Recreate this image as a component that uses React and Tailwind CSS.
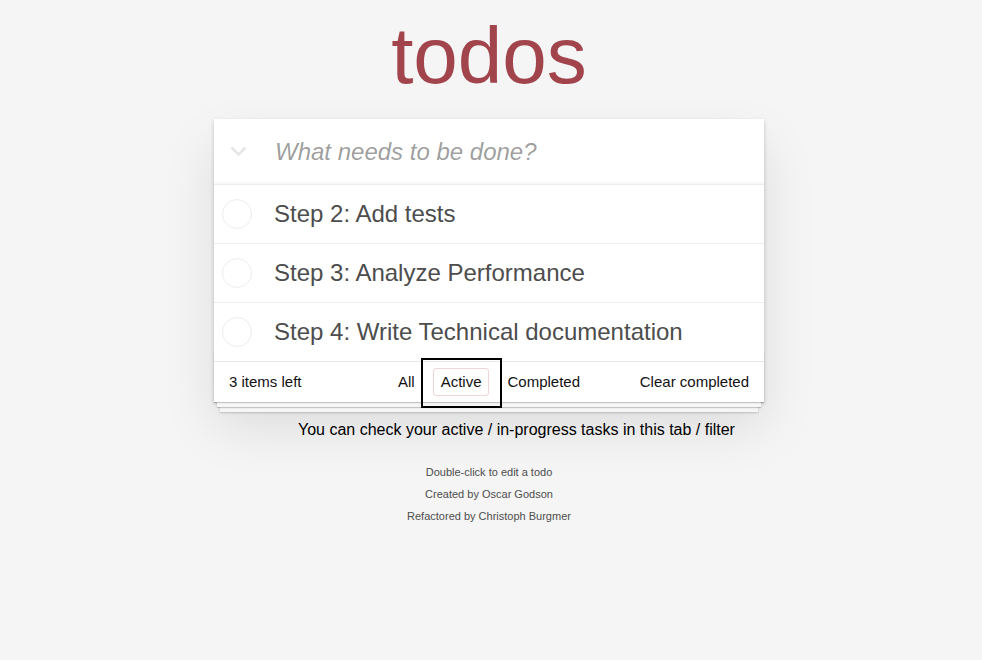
const todos = ['Step 2: Add tests', 'Step 3: Analyze Performance', 'Step 4: Write Technical documentation']

const font = { fontFamily: '"Liberation Sans", Arial, sans-serif' }

export default function App() {
  return (
    <div className="min-h-screen bg-[#f5f5f5] text-[#4d4d4d] pr-[4px]" style={font}>
      <div className="mx-auto w-[550px] pt-[16px]">
        <h1 className="text-center text-[80px] leading-[80px] font-normal text-[#a1444b] mb-[23px]">todos</h1>

        {/* App box */}
        <div className="relative">
          <section className="bg-white shadow-[0_2px_4px_0_rgba(0,0,0,0.2),0_25px_50px_0_rgba(0,0,0,0.1)]">
            <header className="flex items-center h-[65px] shadow-[inset_0_-2px_1px_rgba(0,0,0,0.03)]">
              <div className="w-[61px] h-full flex items-center pl-[16px]">
                <svg width="17" height="11" viewBox="0 0 17 11">
                  <polyline points="1.5,1.5 8.5,8.5 15.5,1.5" fill="none" stroke="#e6e6e6" strokeWidth="2.6" />
                </svg>
              </div>
              <input
                className="flex-1 h-full bg-transparent outline-none text-[24px] text-[#4d4d4d] pr-[16px] placeholder:italic placeholder:text-[rgba(0,0,0,0.4)]"
                style={font}
                placeholder="What needs to be done?"
              />
            </header>

            <ul>
              {todos.map((t) => (
                <li key={t} className="flex items-center h-[59px] border-t border-[#ededed]">
                  <span className="ml-[8px] w-[30px] h-[30px] rounded-full border border-[#ededed]" />
                  <span className="ml-[22px] mb-[2px] text-[24px] leading-[29px] text-[#4d4d4d]">{t}</span>
                </li>
              ))}
            </ul>

            <footer className="relative grid grid-cols-[1fr_auto_1fr] items-center h-[41px] px-[15px] border-t border-[#e6e6e6] text-[15px] text-[#111] before:content-[''] before:absolute before:inset-x-0 before:bottom-0 before:h-[50px] before:pointer-events-none before:shadow-[0_1px_1px_rgba(0,0,0,0.2),0_8px_0_-3px_#f6f6f6,0_9px_1px_-3px_rgba(0,0,0,0.2),0_16px_0_-6px_#f6f6f6,0_17px_2px_-6px_rgba(0,0,0,0.2)]">
              <span className="leading-[20px]">3 items left</span>
              <ul className="flex gap-[4px] leading-[20px]">
                <li className="m-[3px] px-[7px] py-[3px] border border-transparent rounded-[3px]">All</li>
                <li className="m-[3px] px-[7px] py-[3px] border border-[rgba(175,47,47,0.2)] rounded-[3px]">Active</li>
                <li className="m-[3px] px-[7px] py-[3px] border border-transparent rounded-[3px]">Completed</li>
              </ul>
              <span className="justify-self-end leading-[20px]">Clear completed</span>
            </footer>
          </section>

          {/* Tour highlight */}
          <div className="absolute left-[207px] top-[239px] w-[81px] h-[50px] border-2 border-black" />
          <p className="absolute left-[84px] top-[302px] whitespace-nowrap text-[16px] leading-[18px] text-black">
            You can check your active / in-progress tasks in this tab / filter
          </p>
        </div>

        <footer className="mt-[59px] text-center text-[11px] leading-[22px] text-[#4d4d4d]">
          <p>Double-click to edit a todo</p>
          <p>Created by Oscar Godson</p>
          <p>Refactored by Christoph Burgmer</p>
        </footer>
      </div>
    </div>
  )
}
